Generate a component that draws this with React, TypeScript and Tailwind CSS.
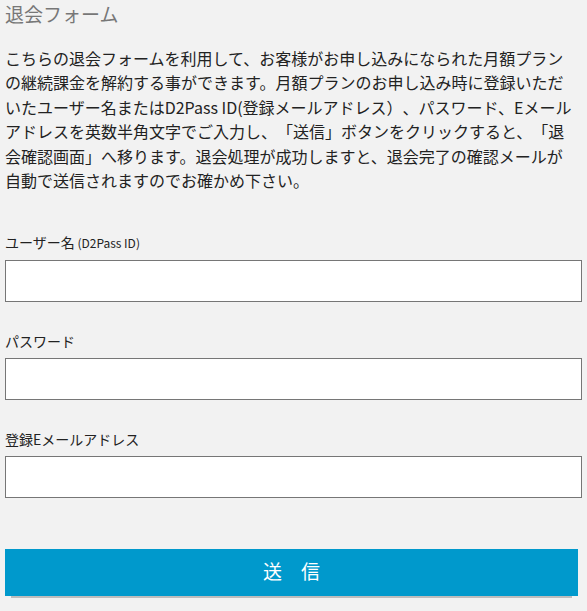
import React from "react";

const jp = "font-['Noto_Sans_CJK_JP','Noto_Sans',sans-serif] [text-spacing-trim:space-all]";

const lines = [
  "こちらの退会フォームを利用して、お客様がお申し込みになられた月額プラン",
  "の継続課金を解約する事ができます。月額プランのお申し込み時に登録いただ",
  "いたユーザー名またはD2Pass ID(登録メールアドレス）、パスワード、Eメール",
  "アドレスを英数半角文字でご入力し、「送信」ボタンをクリックすると、「退",
  "会確認画面」へ移ります。退会処理が成功しますと、退会完了の確認メールが",
  "自動で送信されますのでお確かめ下さい。",
];

function Field({ label, sub }: { label: string; sub?: string }) {
  return (
    <div className="flex flex-col">
      <label className="text-[14px] leading-[20px] text-[#222]">
        {label}
        {sub && <span className="text-[12px]"> {sub}</span>}
      </label>
      <input className="mt-[7px] h-[42px] w-full border border-[#767676] bg-white px-2 outline-none" />
    </div>
  );
}

export default function App() {
  return (
    <div className={`min-h-[611px] bg-[#f2f2f2] px-[5px] ${jp}`}>
      <h1 className="pt-[2px] text-[19px] leading-[24px] text-[#777]">退会フォーム</h1>
      <p className="mt-[20px] w-[577px] text-[16px] leading-[24.4px] text-[#222]">
        {lines.map((l) => (
          <span key={l} className="block whitespace-nowrap">
            {l}
          </span>
        ))}
      </p>
      <div className="mt-[40px] flex w-[577px] flex-col gap-[29px]">
        <Field label="ユーザー名" sub="(D2Pass ID)" />
        <Field label="パスワード" />
        <Field label="登録Eメールアドレス" />
      </div>
      <button className="mt-[51px] h-[47px] w-[573px] bg-[#0099cc] pb-[3px] text-[19px] text-white shadow-[0_8px_0_-6px_#bdbdbd]">
        送　信
      </button>
    </div>
  );
}
